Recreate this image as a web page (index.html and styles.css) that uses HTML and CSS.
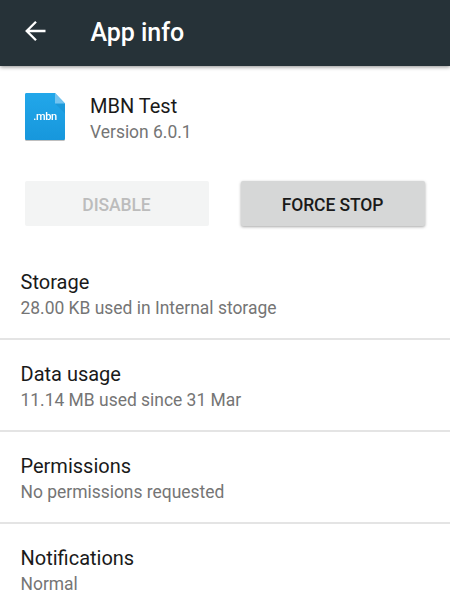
FILE: index.html
```html
<!DOCTYPE html>
<html lang="en">
<head>
    <meta charset="UTF-8">
    <meta name="viewport" content="width=device-width, initial-scale=1.0">
    <title>App info</title>
    <link rel="stylesheet" href="styles.css">
</head>
<body>
    <header class="toolbar">
        <svg class="back" viewBox="0 0 30 30" width="30" height="30">
            <path d="M25.5 15H7M16 5.700L6.700 15l9.300 9.300" fill="none" stroke="#fff" stroke-width="2.300"/>
        </svg>
        <h1 class="title">App info</h1>
    </header>

    <section class="app">
        <div class="app-icon">
            <svg viewBox="0 0 40 48" width="40" height="48">
                <defs>
                    <linearGradient id="sheet" x1="0" y1="0" x2="0" y2="1">
                        <stop offset="0" stop-color="#22a7ea"/>
                        <stop offset="1" stop-color="#1797dc"/>
                    </linearGradient>
                </defs>
                <path d="M1.5 0H30l10 10.500v35a1.500 1.500 0 0 1-1.500 1.500h-37a1.500 1.500 0 0 1-1.500-1.500v-44a1.500 1.500 0 0 1 1.500-1.500z" fill="url(#sheet)"/>
                <path d="M30 10.500h10v10z" fill="#1689c8" opacity="0.4"/>
                <path d="M30 0l10 10.500H30z" fill="#74c4f0"/>
            </svg>
            <span class="ext">.mbn</span>
        </div>
        <div class="app-text">
            <h2 class="name">MBN Test</h2>
            <p class="summary">Version 6.0.1</p>
        </div>
    </section>

    <div class="buttons">
        <button class="btn" disabled>DISABLE</button>
        <button class="btn">FORCE STOP</button>
    </div>

    <ul class="list">
        <li class="item">
            <h2 class="name">Storage</h2>
            <p class="summary">28.00 KB used in Internal storage</p>
        </li>
        <li class="item">
            <h2 class="name">Data usage</h2>
            <p class="summary">11.14 MB used since 31 Mar</p>
        </li>
        <li class="item">
            <h2 class="name">Permissions</h2>
            <p class="summary">No permissions requested</p>
        </li>
        <li class="item">
            <h2 class="name">Notifications</h2>
            <p class="summary">Normal</p>
        </li>
    </ul>
</body>
</html>
```
FILE: styles.css
```css
* {
    box-sizing: border-box;
    margin: 0;
    padding: 0;
}

body {
    height: 606px;
    overflow: hidden;
    background-color: #fff;
    font-family: Roboto, sans-serif;
}

.toolbar {
    display: flex;
    align-items: center;
    height: 66px;
    padding: 0 0 4px 20px;
    background-color: #263238;
    box-shadow: 0 1px 4px rgba(0, 0, 0, 0.45);
}

.title {
    margin-left: 40.5px;
    padding-top: 2px;
    color: #fff;
    font-size: 25px;
    font-weight: 500;
    letter-spacing: -0.05px;
}

.app {
    display: flex;
    height: 115px;
    padding: 27px 25px 0;
}

.app-icon {
    position: relative;
    width: 40px;
    height: 48px;
    filter: drop-shadow(0 1px 0 rgba(0, 0, 0, 0.25));
}

.ext {
    position: absolute;
    top: 16px;
    left: 0;
    width: 40px;
    color: #fff;
    font-size: 11px;
    font-weight: 500;
    letter-spacing: -0.3px;
    line-height: 16px;
    text-align: center;
}

.app-text {
    margin-left: 25px;
}

.name {
    color: #1a1a1a;
    font-size: 20px;
    font-weight: 400;
    line-height: 27px;
}

.summary {
    color: #757575;
    font-size: 17.45px;
    line-height: 24px;
}

.buttons {
    display: flex;
    gap: 32px;
    height: 66px;
    padding: 0 25px;
}

.btn {
    flex: 1;
    height: 45px;
    padding: 2px 1px 0 0;
    border: none;
    border-radius: 2px;
    background-color: #d6d7d7;
    box-shadow: 0 1px 3px rgba(0, 0, 0, 0.35);
    color: #1a1a1a;
    font-family: inherit;
    font-size: 17.5px;
    font-weight: 500;
    letter-spacing: -0.1px;
}

.btn:disabled {
    background-color: #f3f4f4;
    box-shadow: none;
    color: #bcbcbc;
}

.list {
    list-style: none;
}

.item {
    height: 92px;
    padding: 22px 20px 0 20.5px;
    border-bottom: 2px solid #e4e4e4;
}

.item:first-child {
    height: 93px;
}

.item + .item {
    padding-top: 21px;
}
```
